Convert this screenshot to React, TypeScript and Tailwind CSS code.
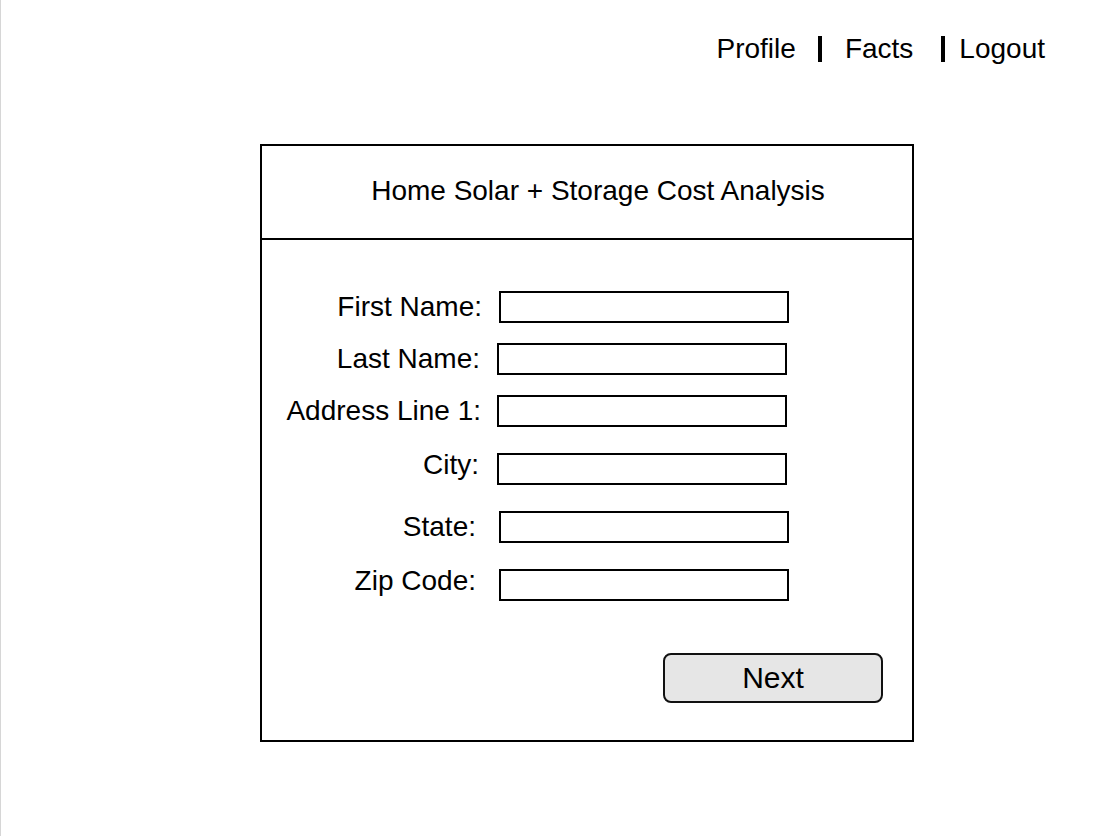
const FIELDS = [
  { label: "First Name:", labelPr: "pr-[16px]", boxMl: "ml-[237px]", mt: "mt-[51px]", lift: "" },
  { label: "Last Name:", labelPr: "pr-[18px]", boxMl: "ml-[235px]", mt: "mt-[20px]", lift: "" },
  { label: "Address Line 1:", labelPr: "pr-[17px]", boxMl: "ml-[235px]", mt: "mt-[20px]", lift: "" },
  { label: "City:", labelPr: "pr-[19px]", boxMl: "ml-[235px]", mt: "mt-[26px]", lift: "-translate-y-[4px]" },
  { label: "State:", labelPr: "pr-[22px]", boxMl: "ml-[237px]", mt: "mt-[26px]", lift: "" },
  { label: "Zip Code:", labelPr: "pr-[22px]", boxMl: "ml-[237px]", mt: "mt-[26px]", lift: "-translate-y-[4px]" },
];

function NavBar() {
  return (
    <nav className="flex justify-end items-center h-[40px] mt-[29px] pr-[71px] text-[28px] leading-none text-black">
      <span>Profile</span>
      <span className="ml-[22px] w-[4px] h-[26px] bg-black" />
      <span className="ml-[23px]">Facts</span>
      <span className="ml-[28px] w-[4px] h-[26px] bg-black" />
      <span className="ml-[14px]">Logout</span>
    </nav>
  );
}

export default function App() {
  return (
    <div
      className="w-[1116px] h-[836px] bg-white border-l border-[#d6d6d6] overflow-hidden"
      style={{ fontFamily: '"Liberation Sans", Arial, Helvetica, sans-serif' }}
    >
      <NavBar />

      {/* Form card */}
      <div className="ml-[259px] mt-[75px] w-[654px] h-[598px] border-2 border-black flex flex-col">
        <div className="h-[94px] shrink-0 flex items-center justify-center pl-[22px] pb-[2px] border-b-2 border-black text-[28px] leading-none">
          Home Solar + Storage Cost Analysis
        </div>

        <div className="flex flex-col flex-1">
          {FIELDS.map((f) => (
            <div key={f.label} className={`relative h-[32px] ${f.mt}`}>
              <div
                className={`absolute left-0 top-0 h-[32px] w-[236px] flex items-center justify-end text-[28px] leading-none ${f.labelPr} ${f.lift}`}
              >
                {f.label}
              </div>
              <div className={`${f.boxMl} w-[290px] h-[32px] border-2 border-black bg-white`} />
            </div>
          ))}

          <div className="flex justify-end mt-[52px] pr-[29px]">
            <button className="w-[220px] h-[50px] rounded-[8px] border-2 border-[#111] bg-[#e6e6e6] text-[30px] leading-none text-black">
              Next
            </button>
          </div>
        </div>
      </div>
    </div>
  );
}
